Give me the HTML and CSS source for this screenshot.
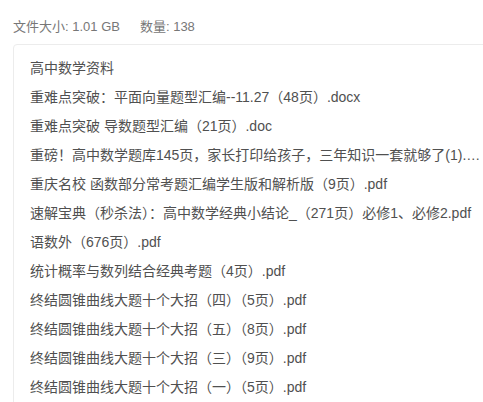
FILE: index.html
```html
<!DOCTYPE html>
<html lang="zh-CN">
<head>
<meta charset="utf-8">
<title>文件列表</title>
<link rel="stylesheet" href="styles.css">
</head>
<body>
<div class="page">
  <div class="summary">
    <span class="stat">文件大小: 1.01 GB</span>
    <span class="stat">数量: 138</span>
  </div>
  <div class="files">
    <ul class="file-list">
      <li class="file">高中数学资料</li>
      <li class="file">重难点突破：平面向量题型汇编--11.27（48页）.docx</li>
      <li class="file">重难点突破 导数题型汇编（21页）.doc</li>
      <li class="file">重磅！高中数学题库145页，家长打印给孩子，三年知识一套就够了(1).pdf</li>
      <li class="file">重庆名校 函数部分常考题汇编学生版和解析版（9页）.pdf</li>
      <li class="file">速解宝典（秒杀法）：高中数学经典小结论_（271页）必修1、必修2.pdf</li>
      <li class="file">语数外（676页）.pdf</li>
      <li class="file">统计概率与数列结合经典考题（4页）.pdf</li>
      <li class="file">终结圆锥曲线大题十个大招（四）（5页）.pdf</li>
      <li class="file">终结圆锥曲线大题十个大招（五）（8页）.pdf</li>
      <li class="file">终结圆锥曲线大题十个大招（三）（9页）.pdf</li>
      <li class="file">终结圆锥曲线大题十个大招（一）（5页）.pdf</li>
    </ul>
  </div>
</div>
</body>
</html>
```
FILE: styles.css
```css
html, body {
  margin: 0;
  padding: 0;
  background: #ffffff;
  overflow: hidden;
}
body {
  font-family: "Liberation Sans", "Noto Sans CJK SC", sans-serif;
}
.page {
  padding: 17px 0 0 13px;
}
.summary {
  display: flex;
  gap: 20px;
  font-size: 13px;
  line-height: 20px;
  color: #777777;
}
.files {
  margin-top: 7px;
  width: 520px;
  border: 1px solid #ececec;
  border-radius: 4px;
  padding: 9px 0 20px 16px;
}
.file-list {
  list-style: none;
  margin: 0;
  padding: 0;
}
.file {
  width: 453px;
  font-size: 14px;
  line-height: 29px;
  color: #505050;
  white-space: nowrap;
  overflow: hidden;
  text-overflow: ellipsis;
}
```
